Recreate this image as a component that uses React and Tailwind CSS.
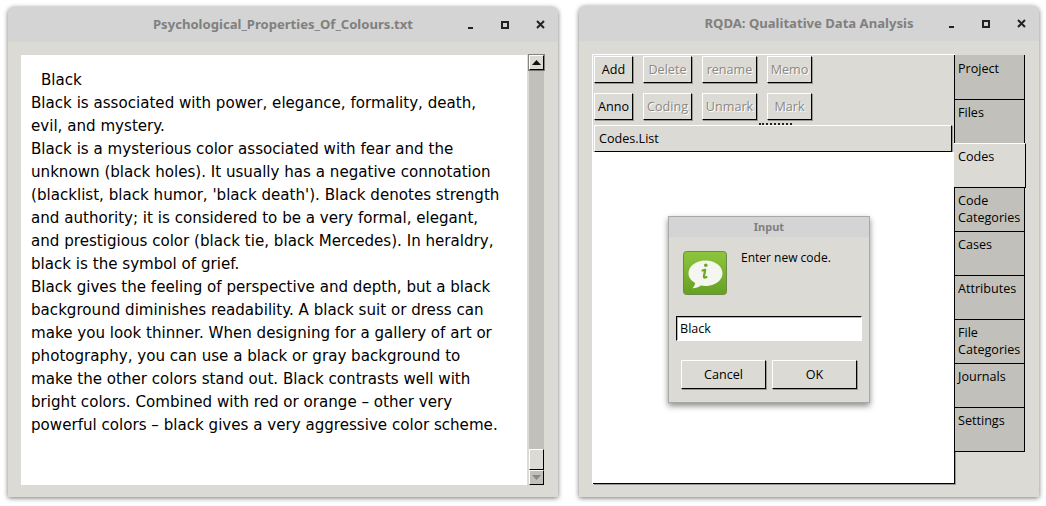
const textLines = [
  { text: 'Black', indent: true },
  { text: 'Black is associated with power, elegance, formality, death,' },
  { text: 'evil, and mystery.' },
  { text: 'Black is a mysterious color associated with fear and the' },
  { text: 'unknown (black holes). It usually has a negative connotation' },
  { text: "(blacklist, black humor, 'black death'). Black denotes strength" },
  { text: 'and authority; it is considered to be a very formal, elegant,' },
  { text: 'and prestigious color (black tie, black Mercedes). In heraldry,' },
  { text: 'black is the symbol of grief.' },
  { text: 'Black gives the feeling of perspective and depth, but a black' },
  { text: 'background diminishes readability. A black suit or dress can' },
  { text: 'make you look thinner. When designing for a gallery of art or' },
  { text: 'photography, you can use a black or gray background to' },
  { text: 'make the other colors stand out. Black contrasts well with' },
  { text: 'bright colors. Combined with red or orange – other very' },
  { text: 'powerful colors – black gives a very aggressive color scheme.' },
];

const tabs = [
  { label: 'Project' },
  { label: 'Files' },
  { label: 'Codes', active: true },
  { label: 'Code Categories' },
  { label: 'Cases' },
  { label: 'Attributes' },
  { label: 'File Categories' },
  { label: 'Journals' },
  { label: 'Settings' },
];

function WindowControls() {
  return (
    <div className="absolute right-0 top-0 flex h-full items-center">
      <span className="flex w-[35px] justify-center">
        <svg width="8" height="8" viewBox="0 0 8 8"><rect x="1" y="6" width="5" height="2" fill="#222" /></svg>
      </span>
      <span className="flex w-[34px] justify-center">
        <svg width="8" height="8" viewBox="0 0 8 8"><rect x="1" y="1" width="6" height="6" fill="none" stroke="#222" strokeWidth="2" /></svg>
      </span>
      <span className="flex w-[36px] justify-center">
        <svg width="9" height="9" viewBox="0 0 9 9"><path d="M1 1l7 7M8 1l-7 7" stroke="#222" strokeWidth="2" /></svg>
      </span>
    </div>
  );
}

function TitleBar({ title }) {
  return (
    <div className="relative flex h-[35px] items-center justify-center rounded-t-[6px] bg-[#d4d4d4]">
      <span className="font-['Noto_Sans',sans-serif] text-[13.1px] font-bold text-[#808080]">{title}</span>
      <WindowControls />
    </div>
  );
}

function ToolButton({ label, width, disabled }) {
  return (
    <div
      className={`flex h-[27px] items-center justify-center border border-b-black border-l-white border-r-black border-t-white bg-[#dcdad5] pt-[1px] text-[12.6px] shadow-[1px_1px_0_rgba(0,0,0,0.3)] ${width} ${
        disabled ? 'text-[#8a8985] [text-shadow:1px_1px_0_#fff]' : 'text-black'
      }`}
    >
      {label}
    </div>
  );
}

function Scrollbar() {
  return (
    <div className="flex w-[15px] flex-col bg-[#c2c0ba]">
      <div className="flex h-[15px] items-center justify-center border border-black border-l-white border-t-white bg-[#dcdad5] outline outline-1 outline-black/40">
        <svg width="9" height="5" viewBox="0 0 9 5"><path d="M4.5 0L9 5H0z" fill="#111" /></svg>
      </div>
      <div className="flex-1" />
      <div className="h-[21px] border border-b-black border-l-white border-r-black border-t-white bg-[#dcdad5]" />
      <div className="flex h-[15px] items-center justify-center border border-b-black border-l-white border-r-black border-t-white bg-[#c2c0ba]">
        <svg width="9" height="5" viewBox="0 0 9 5"><path d="M0 0h9L4.5 5z" fill="#8a8985" /></svg>
      </div>
    </div>
  );
}

function InfoIcon() {
  return (
    <svg width="44" height="44" viewBox="0 0 44 44">
      <defs>
        <linearGradient id="infoBg" x1="0" y1="0" x2="0" y2="1">
          <stop offset="0" stopColor="#8dc63c" />
          <stop offset="1" stopColor="#66a024" />
        </linearGradient>
      </defs>
      <rect x="0.5" y="0.5" width="43" height="43" rx="3" fill="url(#infoBg)" stroke="#6b8a44" />
      <path d="M22.500 9.500c9.500 0 17 5.500 17 12.800S32 35 22.500 35c-1.700 0-3.200-.2-4.700-.5-2.200 1.800-5 2.700-8.300 2.700 1.500-1.600 2.400-3.300 2.700-5.200C8 29.800 5.500 26.300 5.500 22.300 5.500 15 13 9.500 22.500 9.500z" fill="#f6f6f0" />
      <circle cx="22.800" cy="14.200" r="1.800" fill="#6fa52a" />
      <path d="M19.500 19.500l2.700-.7-1.300 6.700c-.2 1.300.6 1.500 2.600.6" fill="none" stroke="#6fa52a" strokeWidth="2.200" strokeLinecap="round" strokeLinejoin="round" />
    </svg>
  );
}

function InputDialog() {
  return (
    <div className="absolute left-[76px] top-[162px] h-[187px] w-[202px] border border-[#a8a8a4] bg-[#dcdad5] shadow-[0_3px_6px_rgba(0,0,0,0.45)]">
      <div className="flex h-[20px] items-center justify-center bg-[#d4d4d4] font-['Noto_Sans',sans-serif] text-[11px] font-bold text-[#808080]">
        Input
      </div>
      <div className="flex gap-[14px] pl-[14px] pt-[14px]">
        <InfoIcon />
        <div className="text-[12px] leading-[14px] text-black">Enter new code.</div>
      </div>
      <div className="ml-[7px] mt-[21px] flex h-[25px] w-[186px] items-center border border-b-white border-l-black border-r-white border-t-black bg-white pl-[3px] pt-[1px] text-[12.6px] text-black shadow-[inset_1px_1px_0_rgba(0,0,0,0.3)]">
        Black
      </div>
      <div className="ml-[12px] mt-[19px] flex gap-[6px]">
        <div className="flex h-[29px] w-[85px] items-center justify-center border border-b-black border-l-white border-r-black border-t-white pt-[1px] text-[12.6px] text-black shadow-[1px_1px_0_rgba(0,0,0,0.3)]">Cancel</div>
        <div className="flex h-[29px] w-[85px] items-center justify-center border border-b-black border-l-white border-r-black border-t-white pt-[1px] text-[12.6px] text-black shadow-[1px_1px_0_rgba(0,0,0,0.3)]">OK</div>
      </div>
    </div>
  );
}

export default function App() {
  return (
    <div className="flex h-[506px] w-[1046px] items-start gap-[21px] overflow-hidden bg-white pl-[8px] pt-[6px] font-['Open_Sans',sans-serif]">
      {/* text viewer */}
      <div className="mt-[1px] h-[490px] w-[550px] rounded-t-[6px] bg-[#dcdad5] shadow-[0_1px_5px_rgba(0,0,0,0.55)]">
        <TitleBar title="Psychological_Properties_Of_Colours.txt" />
        <div className="flex h-[443px] gap-[2px] pl-[13px] pt-[13px]">
          <div className="h-[430px] w-[506px] bg-white pl-[10px] pt-[14px] font-['DejaVu_Sans',sans-serif] text-[15.1px] leading-[23px] text-black">
            {textLines.map((line) => (
              <div key={line.text} className={line.indent ? 'whitespace-nowrap pl-[10px]' : 'whitespace-nowrap'}>
                {line.text}
              </div>
            ))}
          </div>
          <Scrollbar />
        </div>
      </div>

      {/* RQDA main window */}
      <div className="h-[491px] w-[460px] rounded-t-[6px] bg-[#dcdad5] shadow-[0_1px_5px_rgba(0,0,0,0.55)]">
        <TitleBar title="RQDA: Qualitative Data Analysis" />
        <div className="relative ml-[13px] mt-[13px] flex">
          <div className="flex h-[430px] w-[363px] flex-col border-l border-t border-l-white border-t-white">
            <div className="flex gap-[10px] pl-[1px] pt-[1px]">
              <ToolButton label="Add" width="w-[39px]" />
              <ToolButton label="Delete" width="w-[49px]" disabled />
              <ToolButton label="rename" width="w-[55px]" disabled />
              <ToolButton label="Memo" width="w-[45px]" disabled />
            </div>
            <div className="mt-[10px] flex gap-[10px] pl-[1px]">
              <ToolButton label="Anno" width="w-[39px]" />
              <ToolButton label="Coding" width="w-[49px]" disabled />
              <ToolButton label="Unmark" width="w-[55px]" disabled />
              <ToolButton label="Mark" width="w-[45px]" disabled />
            </div>
            <div className="ml-[166px] mt-[2px] h-[3px] w-[33px] border-b-2 border-dotted border-[#222]" />
            <div className="ml-[1px] flex h-[27px] w-[358px] items-center border border-b-black border-l-white border-r-black border-t-white pl-[4px] pt-[1px] text-[12.6px] text-black shadow-[1px_1px_0_rgba(0,0,0,0.3)]">
              Codes.List
            </div>
            <div className="flex-1 border-b border-r border-black bg-white shadow-[1px_1px_0_rgba(0,0,0,0.3)]" />
          </div>
          <div className="mt-[1px] flex w-[72px] flex-col">
            {tabs.map((tab) => (
              <div
                key={tab.label}
                className={
                  tab.active
                    ? 'relative -ml-px -mt-px h-[45px] w-[72px] border-b border-r border-t border-b-black border-r-black border-t-white bg-[#dcdad5] pl-[4px] pr-[2px] pt-[4px] text-[12.6px] leading-[17px] text-black'
                    : '-ml-px h-[44px] w-[71px] border-b border-l border-r border-black bg-[#c2c0ba] pl-[3px] pr-[2px] pt-[4px] text-[12.6px] leading-[17px] text-black first:h-[45px] first:pt-[5px]'
                }
              >
                {tab.label}
              </div>
            ))}
          </div>
          <InputDialog />
        </div>
      </div>
    </div>
  );
}
